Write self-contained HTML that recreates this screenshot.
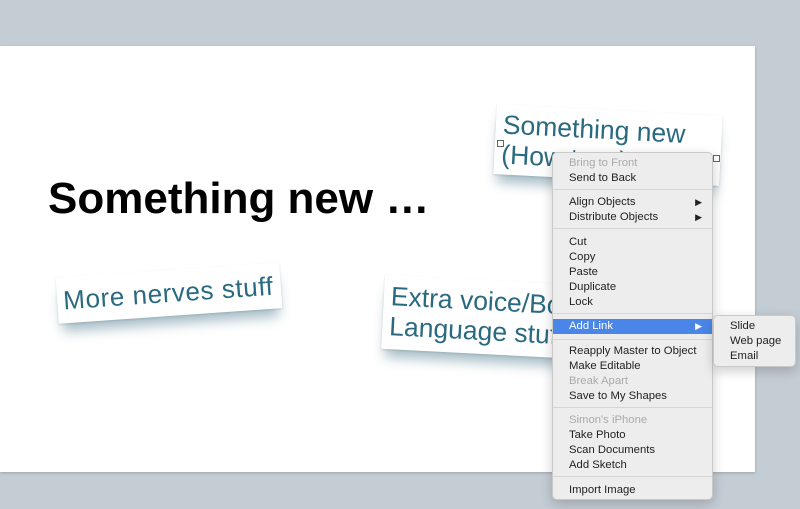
<!DOCTYPE html>
<html><head><style>
body{margin:0;width:800px;height:509px;background:#c4ccd4;position:relative;overflow:hidden;font-family:"Liberation Sans",sans-serif}
.slide{position:absolute;left:0;top:46px;width:755px;height:426px;background:#fff;box-shadow:0 1px 3px rgba(0,0,0,.2)}
.title{position:absolute;left:48px;top:174px;font-size:44px;font-weight:bold;color:#000;letter-spacing:0}
.card{position:absolute;background:#fff;color:#2a6a80;box-shadow:0 12px 12px -4px rgba(60,110,130,.45),0 1px 2px rgba(0,0,0,.15);white-space:nowrap}
.menu{position:absolute;background:#ededed;border:1px solid #c9c9c9;border-radius:5px;box-shadow:0 4px 12px rgba(0,0,0,.2);font-size:11.3px;color:#222}
.it{position:absolute;left:0;right:0;height:15px;line-height:15px;padding-left:16px}
.dis{color:#aaa}
.sep{position:absolute;left:0;right:0;height:1px;background:#d6d6d6}
.arr{position:absolute;right:10px;font-size:9px}
.h{position:absolute;width:5px;height:5px;border:1px solid #666;background:#fff}
</style></head><body>
<div class="slide"></div>
<div class="title">Something new …</div>
<div class="card" style="left:57px;top:270px;width:224px;height:46px;transform:rotate(-4deg);font-size:26px;line-height:46px;padding-left:6px;box-sizing:border-box;letter-spacing:0.6px">More nerves stuff</div>
<div class="card" style="left:383px;top:280px;width:200px;height:74px;transform:rotate(3deg);font-size:26.5px;line-height:30px;padding:6px 0 0 7px;box-sizing:border-box;overflow:hidden">Extra voice/Body<br>Language stuff</div>
<div class="card" style="left:495px;top:110px;width:226px;height:70px;transform:rotate(3deg);font-size:26.5px;line-height:30px;padding:5px 0 0 7px;box-sizing:border-box;overflow:hidden">Something new<br>(How to…)</div>
<div class="h" style="left:497px;top:140px"></div>
<div class="h" style="left:713px;top:155px"></div>
<div class="menu" style="left:552px;top:152px;width:159px;height:346px">
<div class="it dis" style="top:3px">Bring to Front</div>
<div class="it" style="top:18px">Send to Back</div>
<div class="sep" style="top:36px"></div>
<div class="it" style="top:42px">Align Objects<span class="arr">▶</span></div>
<div class="it" style="top:57px">Distribute Objects<span class="arr">▶</span></div>
<div class="sep" style="top:75px"></div>
<div class="it" style="top:82px">Cut</div>
<div class="it" style="top:97px">Copy</div>
<div class="it" style="top:112px">Paste</div>
<div class="it" style="top:127px">Duplicate</div>
<div class="it" style="top:142px">Lock</div>
<div class="sep" style="top:160px"></div>
<div class="it" style="top:166px;background:#4a86e8;color:#fff">Add Link<span class="arr">▶</span></div>
<div class="sep" style="top:186px"></div>
<div class="it" style="top:191px">Reapply Master to Object</div>
<div class="it" style="top:206px">Make Editable</div>
<div class="it dis" style="top:221px">Break Apart</div>
<div class="it" style="top:236px">Save to My Shapes</div>
<div class="sep" style="top:254px"></div>
<div class="it dis" style="top:260px">Simon's iPhone</div>
<div class="it" style="top:275px">Take Photo</div>
<div class="it" style="top:290px">Scan Documents</div>
<div class="it" style="top:305px">Add Sketch</div>
<div class="sep" style="top:323px"></div>
<div class="it" style="top:330px">Import Image</div>
</div>
<div class="menu" style="left:713px;top:315px;width:81px;height:50px">
<div class="it" style="top:3px">Slide</div>
<div class="it" style="top:18px">Web page</div>
<div class="it" style="top:33px">Email</div>
</div>
</body></html>
